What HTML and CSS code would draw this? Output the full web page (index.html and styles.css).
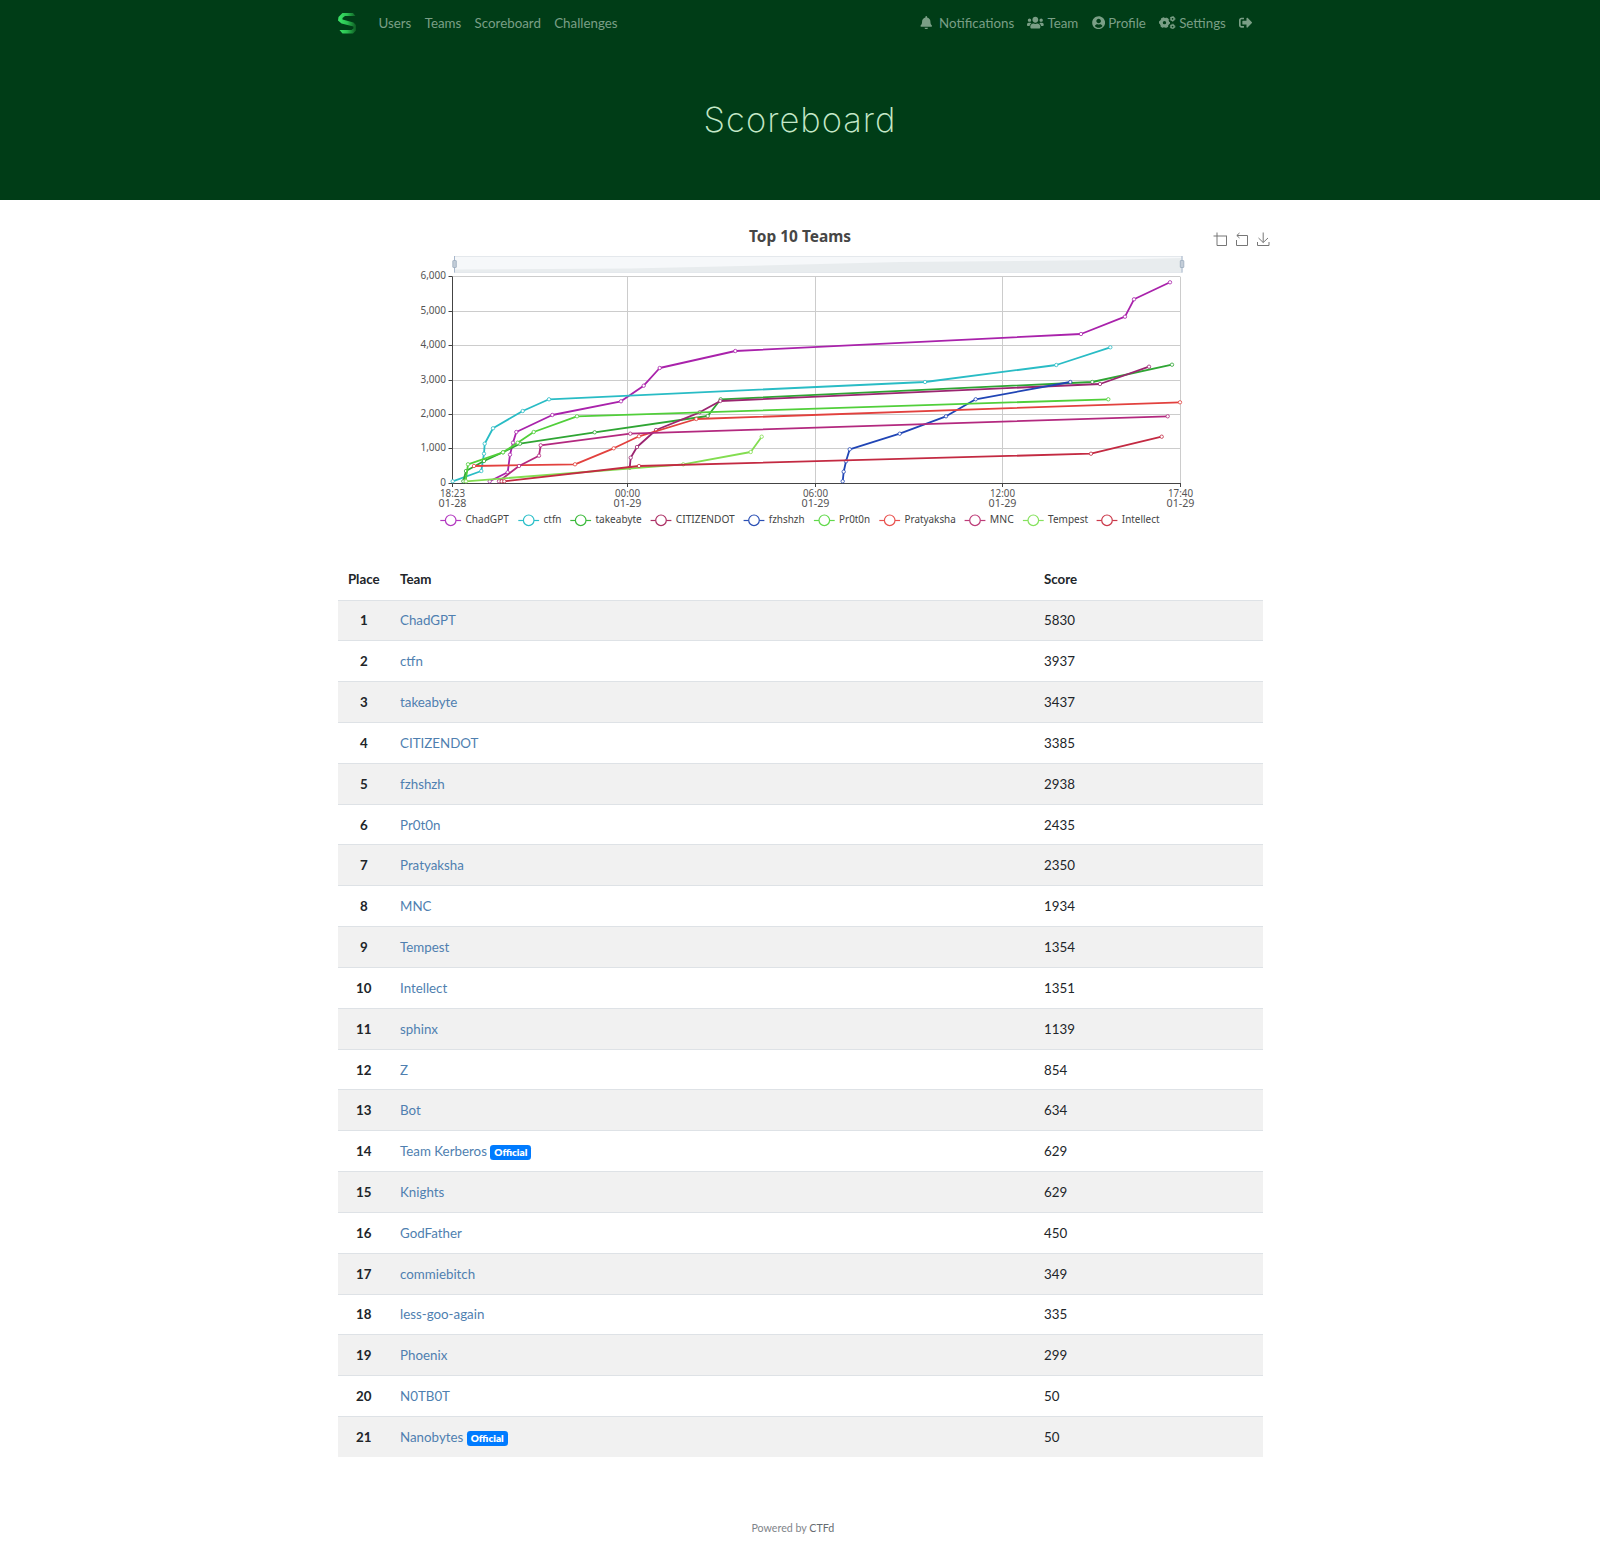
FILE: index.html
```html
<!DOCTYPE html>
<html lang="en">
<head>
<meta charset="utf-8">
<title>Scoreboard</title>
<link rel="stylesheet" href="styles.css">
</head>
<body>
<header class="hero">
  <nav class="navbar">
    <a class="brand" href="#">
      <svg width="20" height="24" viewBox="0 0 20 24">
        <defs><linearGradient id="brandFill" x1="0" x2="1"><stop offset="0" stop-color="#3be668"/><stop offset=".5" stop-color="#2bc052"/><stop offset="1" stop-color="#0d5a22"/></linearGradient></defs>
        <path fill="url(#brandFill)" d="M4.500 2H15l2.500 3H7L4.500 7v1.500l11 3 2.500 2.500v5.500L15 22.500H4.500L1.500 19h12l2-1.500v-2L3.500 12.500 0 9.500.500 6z"/>
      </svg>
    </a>
    <div class="links">
      <a href="#">Users</a><a href="#">Teams</a><a href="#">Scoreboard</a><a href="#">Challenges</a>
    </div>
    <div class="links account">
      <a href="#" class="wide"><svg class="icon bell" viewBox="0 0 448 512"><path d="M224 512c35.320 0 63.970-28.650 63.970-64H160.030c0 35.350 28.650 64 63.970 64zm215.390-149.710c-19.320-20.760-55.470-51.990-55.470-154.290 0-77.700-54.480-139.900-127.940-155.160V32c0-17.670-14.320-32-31.980-32s-31.980 14.330-31.980 32v20.840C118.560 68.100 64.080 130.300 64.080 208c0 102.300-36.150 133.530-55.470 154.290-6 6.450-8.660 14.160-8.610 21.710.11 16.400 12.980 32 32.100 32h383.800c19.120 0 32-15.600 32.100-32 .05-7.550-2.610-15.270-8.610-21.710z"/></svg>Notifications</a>
      <a href="#"><svg class="icon users" viewBox="0 0 640 512"><path d="M96 224c35.300 0 64-28.700 64-64s-28.700-64-64-64-64 28.700-64 64 28.700 64 64 64zm448 0c35.300 0 64-28.700 64-64s-28.700-64-64-64-64 28.700-64 64 28.700 64 64 64zm32 32h-64c-17.600 0-33.500 7.100-45.100 18.600 40.300 22.100 68.900 62 75.100 109.400h66c17.700 0 32-14.300 32-32v-32c0-35.300-28.700-64-64-64zm-256 0c61.900 0 112-50.100 112-112S381.900 32 320 32 208 82.100 208 144s50.100 112 112 112zm76.800 32h-8.300c-20.800 10-43.900 16-68.500 16s-47.600-6-68.500-16h-8.300C179.600 288 128 339.600 128 403.200V432c0 26.500 21.500 48 48 48h288c26.500 0 48-21.500 48-48v-28.800c0-63.600-51.600-115.200-115.200-115.200zm-223.700-13.400C161.500 263.100 145.600 256 128 256H64c-35.300 0-64 28.700-64 64v32c0 17.700 14.300 32 32 32h65.900c6.300-47.400 34.900-87.300 75.200-109.400z"/></svg>Team</a>
      <a href="#"><svg class="icon circle" viewBox="0 0 496 512"><path d="M248 8C111 8 0 119 0 256s111 248 248 248 248-111 248-248S385 8 248 8zm0 96c48.600 0 88 39.400 88 88s-39.400 88-88 88-88-39.400-88-88 39.400-88 88-88zm0 344c-58.700 0-111.300-26.600-146.500-68.200 18.800-35.400 55.600-59.800 98.500-59.800 2.400 0 4.800.4 7.100 1.100 13 4.200 26.600 6.900 40.900 6.900 14.300 0 28-2.700 40.900-6.900 2.300-.7 4.700-1.100 7.100-1.100 42.900 0 79.700 24.400 98.500 59.800C359.300 421.400 306.700 448 248 448z"/></svg>Profile</a>
      <a href="#"><svg class="icon cogs" viewBox="0 0 640 512"><g fill="none" stroke="currentColor"><circle cx="210" cy="256" r="125" stroke-width="120"/><circle cx="210" cy="256" r="185" stroke-width="50" stroke-dasharray="110 83.730" stroke-dashoffset="55"/><circle cx="520" cy="108" r="62" stroke-width="56"/><circle cx="520" cy="108" r="92" stroke-width="30" stroke-dasharray="52 44.340"/><circle cx="520" cy="404" r="62" stroke-width="56"/><circle cx="520" cy="404" r="92" stroke-width="30" stroke-dasharray="52 44.340"/></g></svg>Settings</a>
      <a href="#"><svg class="icon out" viewBox="0 0 512 512"><path d="M497 273L329 441c-15 15-41 4.500-41-17v-96H152c-13.300 0-24-10.700-24-24v-96c0-13.300 10.700-24 24-24h136V88c0-21.400 25.900-32 41-17l168 168c9.300 9.400 9.300 24.600 0 34zM192 436v-40c0-6.600-5.400-12-12-12H96c-17.700 0-32-14.300-32-32V160c0-17.700 14.300-32 32-32h84c6.600 0 12-5.400 12-12V76c0-6.600-5.400-12-12-12H96c-53 0-96 43-96 96v192c0 53 43 96 96 96h84c6.600 0 12-5.400 12-12z"/></svg></a>
    </div>
  </nav>
  <h1>Scoreboard</h1>
</header>
<main>
  <svg id="chart" class="chart" width="940" height="360" viewBox="330 200 940 360"></svg>
  <table class="standings">
    <colgroup><col class="c-place"><col class="c-team"><col></colgroup>
    <thead><tr><th>Place</th><th>Team</th><th>Score</th></tr></thead>
    <tbody>
      <tr><th>1</th><td><a href="#">ChadGPT</a></td><td>5830</td></tr>
      <tr><th>2</th><td><a href="#">ctfn</a></td><td>3937</td></tr>
      <tr><th>3</th><td><a href="#">takeabyte</a></td><td>3437</td></tr>
      <tr><th>4</th><td><a href="#">CITIZENDOT</a></td><td>3385</td></tr>
      <tr><th>5</th><td><a href="#">fzhshzh</a></td><td>2938</td></tr>
      <tr><th>6</th><td><a href="#">Pr0t0n</a></td><td>2435</td></tr>
      <tr><th>7</th><td><a href="#">Pratyaksha</a></td><td>2350</td></tr>
      <tr><th>8</th><td><a href="#">MNC</a></td><td>1934</td></tr>
      <tr><th>9</th><td><a href="#">Tempest</a></td><td>1354</td></tr>
      <tr><th>10</th><td><a href="#">Intellect</a></td><td>1351</td></tr>
      <tr><th>11</th><td><a href="#">sphinx</a></td><td>1139</td></tr>
      <tr><th>12</th><td><a href="#">Z</a></td><td>854</td></tr>
      <tr><th>13</th><td><a href="#">Bot</a></td><td>634</td></tr>
      <tr><th>14</th><td><a href="#">Team Kerberos</a> <span class="badge">Official</span></td><td>629</td></tr>
      <tr><th>15</th><td><a href="#">Knights</a></td><td>629</td></tr>
      <tr><th>16</th><td><a href="#">GodFather</a></td><td>450</td></tr>
      <tr><th>17</th><td><a href="#">commiebitch</a></td><td>349</td></tr>
      <tr><th>18</th><td><a href="#">less-goo-again</a></td><td>335</td></tr>
      <tr><th>19</th><td><a href="#">Phoenix</a></td><td>299</td></tr>
      <tr><th>20</th><td><a href="#">N0TB0T</a></td><td>50</td></tr>
      <tr><th>21</th><td><a href="#">Nanobytes</a> <span class="badge">Official</span></td><td>50</td></tr>
    </tbody>
  </table>
</main>
<footer>Powered by <b>CTFd</b></footer>
<script src="chart.js"></script>
</body>
</html>
```
FILE: styles.css
```css
* { box-sizing: border-box; }
body {
  margin: 0;
  background: #fff;
  color: #212529;
  font: 13.333px/20px Lato, "Open Sans", sans-serif;
}
a { color: inherit; text-decoration: none; }

.hero { height: 200px; background: #003d17; }
.navbar {
  display: flex;
  align-items: center;
  width: 925px;
  height: 45px;
  margin: 0 auto;
  color: #7a9f86;
}
.brand { display: flex; width: 41px; }
.links { display: flex; gap: 13.300px; }
.links a { display: flex; align-items: center; gap: 3.300px; }
.links .wide { gap: 6.500px; }
.account { margin-left: auto; padding-right: 10px; }
.icon { height: 13.333px; fill: currentColor; }
.bell { width: 12.500px; }
.users, .cogs { width: 16.700px; }
.circle { width: 13.300px; }
.out { width: 13.300px; }
h1 {
  margin: 50px 0 0;
  color: #c4e8c8;
  font: 200 34.500px/50px Inter, Lato, sans-serif;
  letter-spacing: 1px;
  text-align: center;
}

main { width: 925px; margin: 0 auto; }
.chart {
  display: block;
  margin-left: -7.500px;
  font-family: "Noto Sans", "Open Sans", sans-serif;
}
.tick { font-size: 10px; fill: #555; }
.legend { font-size: 10px; fill: #444; }
.title { font-size: 15.500px; font-weight: 700; fill: #464646; }

.standings { width: 100%; border-collapse: collapse; table-layout: fixed; }
.c-place { width: 52.500px; }
.c-team { width: 644px; }
.standings th, .standings td {
  height: 40.833px;
  padding: 0 10px;
  border-top: 1px solid #dee2e6;
  text-align: left;
}
.standings thead th { height: 40px; padding-bottom: 2px; border-top: 0; }
.standings th:first-child { text-align: center; }
.standings tbody tr:nth-child(odd) { background: #f1f1f1; }
.standings a { color: #4f7fb0; }
.badge {
  display: inline-block;
  padding: 2.500px 4px;
  border-radius: 3.300px;
  background: #007bff;
  color: #fff;
  font-size: 10px;
  font-weight: 800;
  line-height: 10px;
}
footer {
  width: 82px;
  margin: 61px 0 0 751.500px;
  color: #7f858a;
  font-size: 10.667px;
  line-height: 20px;
  white-space: nowrap;
}
footer b { color: #666c71; font-weight: 400; }
```
FILE: chart.js
```js
const NS = 'http://www.w3.org/2000/svg';
const chart = document.getElementById('chart');
function add(tag, attrs, text) {
  const el = document.createElementNS(NS, tag);
  for (const key in attrs) el.setAttribute(key, attrs[key]);
  if (text) el.textContent = text;
  chart.appendChild(el);
  return el;
}
const left = 452.7, right = 1180.4, top0 = 277, bottom = 483;

// Title and toolbox
add('text', { x: 800, y: 242, class: 'title', 'text-anchor': 'middle', textLength: 102, lengthAdjust: 'spacingAndGlyphs' }, 'Top 10 Teams');
add('path', { fill: 'none', stroke: '#777', d: 'M1213.500 236H1227M1217 232.500V245.500H1226.500V236M1236.500 240V245.500H1247.500V235.500H1237M1239.500 233L1236.800 235.500L1239.500 238M1257.500 242V245.500H1269V242M1263.200 232.500V242.500M1258.500 238L1263.200 242.500L1268 238' });

// Zoom slider
add('rect', { x: 454.5, y: 256.5, width: 727.5, height: 16, fill: '#f6f8fa', stroke: '#e4e8ec' });
add('path', { fill: '#e8ecee', d: 'M455 269.500L630 268.500L720 266.500L900 262L1110 260L1140 259L1181.500 258V272H455Z' });
for (const x of [454.5, 1182]) {
  add('path', { stroke: '#a7b7cc', d: `M${x} 256V272.500` });
  add('rect', { x: x - 1.7, y: 260.5, width: 3.5, height: 7, rx: .5, fill: '#c3cdd8', stroke: '#9aabbd', 'stroke-width': .8 });
}

// Grid and axes
['6,000', '5,000', '4,000', '3,000', '2,000', '1,000', '0'].forEach((label, i) => {
  const y = [276.5, 311.5, 345.5, 380.5, 414.5, 448.5, 483.5][i];
  if (i < 6) add('path', { stroke: '#ccc', d: `M${left} ${y}H${right}` });
  add('path', { stroke: '#444', d: `M448.500 ${y}H${left}` });
  add('text', { x: 446, y: y + 2, class: 'tick', 'text-anchor': 'end' }, label);
});
[[452.5, '18:23', '01-28'], [627.5, '00:00', '01-29'], [815.5, '06:00', '01-29'], [1002.5, '12:00', '01-29'], [1180.5, '17:40', '01-29']].forEach(([x, time, day], i) => {
  if (i) add('path', { stroke: '#ccc', d: `M${x} ${top0}V${bottom}` });
  add('path', { stroke: '#444', d: `M${x} ${bottom}V487` });
  add('text', { x, y: 497.3, class: 'tick', 'text-anchor': 'middle', textLength: 25, lengthAdjust: 'spacingAndGlyphs' }, time);
  add('text', { x, y: 507.3, class: 'tick', 'text-anchor': 'middle', textLength: 28, lengthAdjust: 'spacingAndGlyphs' }, day);
});
add('path', { stroke: '#444', fill: 'none', d: `M452.500 ${top0}V483.500H1181` });

// name, line colour, legend colour, legend x, label width, points
const series = [
  ['ChadGPT', '#a922ab', '#b339c0', 450.7, 43.3, '489.7,481.3 507.7,472.3 510,454.7 513,442.7 516.3,432 552.3,415 621,401.3 643.7,385.7 659.7,368 735.3,351 1081,334 1125,316.7 1134,299.3 1170,282.3'],
  ['ctfn', '#29bcc5', '#2bbfc9', 528.7, 18, '452.7,481.3 481.3,471 484,453.7 484.7,443.7 493,428.3 522.7,411 549,399.3 925,382 1056.3,365 1110.3,347.3'],
  ['takeabyte', '#2fa534', '#3cba3c', 580.7, 46.3, '463.3,481.3 466,471 484,461 503,452.3 520,443.7 594.7,432.3 707.7,416 720.7,399.3 1092.3,382 1172,364.7'],
  ['CITIZENDOT', '#9b2570', '#ac3065', 661, 59, '629.7,467.7 630.7,457.7 637,447 656,430 699.7,412.3 720.3,401 1100,384 1149,366.7'],
  ['fzhshzh', '#2045b5', '#2b50b5', 754, 35.7, '842.7,481.3 843.7,471.7 846,461.3 849.7,449.3 899.7,433.7 946,416.3 975.7,399.3 1070.3,382'],
  ['Pr0t0n', '#51cf3a', '#62d94c', 824.3, 31, '465.7,481 468,464.3 503,452.3 517.7,442.7 533.7,432 577,416.3 1108.3,399.3'],
  ['Pratyaksha', '#e2413e', '#e9524f', 889.7, 51.3, '474,466 575,464.3 613.7,448.3 639,436.3 696.3,419 1180,402.3'],
  ['MNC', '#b3297f', '#bd3c78', 975, 24, '499,481.3 519,466 539,455.7 540.7,445.3 630.3,433.7 1167.7,416.3'],
  ['Tempest', '#83dd50', '#86e25e', 1033.3, 40, '466,481.3 683.3,464.3 750.7,452 761.7,436.7'],
  ['Intellect', '#c32a42', '#cb3a4b', 1107, 37.7, '501.7,481.3 504.3,481.3 639,466 1091,453.7 1161.7,436.7']
];
for (const [name, color, key, x, width, points] of series) {
  add('polyline', { points, fill: 'none', stroke: color, 'stroke-width': 1.8, 'stroke-linejoin': 'bevel' });
  for (const p of points.split(' ')) {
    const [cx, cy] = p.split(',');
    add('circle', { cx, cy, r: 1.7, fill: '#fff', stroke: color, 'stroke-width': .8 });
  }
  add('path', { stroke: key, 'stroke-width': 1.2, d: `M${x - 10.4} 520.500h20.800` });
  add('circle', { cx: x, cy: 520.3, r: 5.3, fill: '#fff', stroke: key, 'stroke-width': 1.2 });
  add('text', { x: x + 14.8, y: 523, class: 'legend', textLength: width, lengthAdjust: 'spacingAndGlyphs' }, name);
}
```
